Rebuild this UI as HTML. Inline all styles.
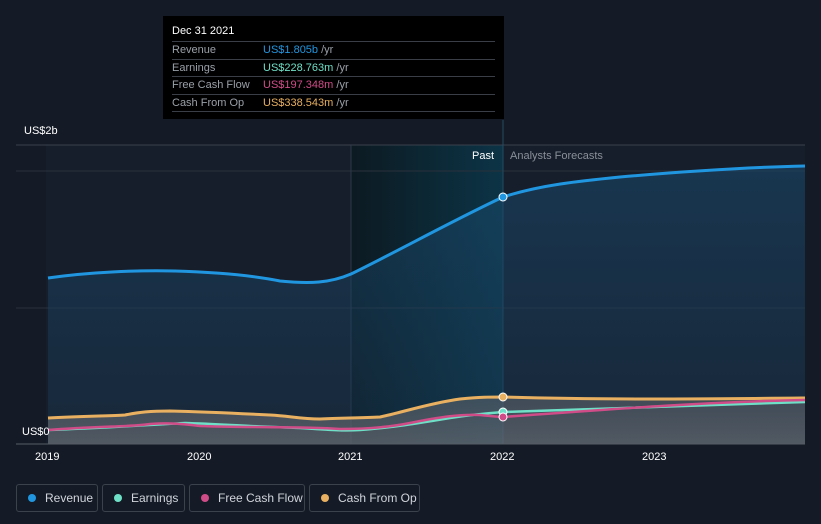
<!DOCTYPE html>
<html><head><meta charset="utf-8"><style>
*{margin:0;padding:0;box-sizing:border-box}
body{width:821px;height:524px;background:#151b26;font-family:"Liberation Sans",sans-serif;position:relative;overflow:hidden}
.tt{position:absolute;left:163px;top:16px;width:341px;height:103px;background:#000;color:#fff;font-size:11px}
.tt .h{position:absolute;left:9px;top:9px}
.row{position:absolute;left:9px;width:323px;height:17.5px;border-top:1px solid #3a3f47;line-height:16px;color:#9aa0a8}
.row span{position:absolute;left:91px}
.lg{position:absolute;top:484px;height:28px;border:1px solid #3c424c;border-radius:3px;color:#d0d4da;font-size:12px;line-height:26px;padding-left:28px;white-space:nowrap}
.lg i{position:absolute;left:11px;top:9px;width:8px;height:8px;border-radius:50%}
.ax{position:absolute;top:451px;color:#fff;font-size:11px}
</style></head><body>
<svg width="821" height="524" style="position:absolute;left:0;top:0">
<defs>
<linearGradient id="pg" x1="0" x2="1" y1="0" y2="0"><stop offset="0" stop-color="#0c1a22"/><stop offset="1" stop-color="#0c3446"/></linearGradient>
<linearGradient id="rf" x1="0" x2="0" y1="0" y2="1"><stop offset="0" stop-color="#1a4a6e" stop-opacity=".55"/><stop offset="1" stop-color="#1a3a56" stop-opacity=".35"/></linearGradient>
<linearGradient id="gf" x1="0" x2="0" y1="0" y2="1"><stop offset="0" stop-color="#5a6068" stop-opacity=".6"/><stop offset="1" stop-color="#6a6e74" stop-opacity=".7"/></linearGradient>
</defs>
<rect x="46" y="145" width="759" height="299" fill="#161e2b"/>
<rect x="351" y="145" width="152" height="299" fill="url(#pg)"/>
<line x1="16" y1="145" x2="805" y2="145" stroke="#3a414c"/>
<line x1="16" y1="171" x2="805" y2="171" stroke="#2a313c"/>
<line x1="16" y1="308" x2="805" y2="308" stroke="#2a313c"/>
<line x1="351" y1="145" x2="351" y2="444" stroke="#2a3a48"/>
<line x1="503" y1="120" x2="503" y2="444" stroke="#1f4d63"/>
<path d="M48,278 C90,272 140,270 175,271 C210,272 250,275 280,281 C310,284 330,283 351,274 C400,250 450,222 503,197 C540,185 580,181 620,177 C700,170 760,167 805,166 L805,444 L48,444Z" fill="url(#rf)"/>
<path d="M48,418 C80,416 110,416 125,415 C140,412 150,411 170,411 C210,412 250,414 270,415 C290,416 300,419 320,419 C340,418 360,418 380,417 C400,413 430,403 460,399 C480,397 490,397 503,397 C600,400 700,399 805,398 L805,444 L48,444Z" fill="url(#gf)"/>
<path d="M48,278 C90,272 140,270 175,271 C210,272 250,275 280,281 C310,284 330,283 351,274 C400,250 450,222 503,197 C540,185 580,181 620,177 C700,170 760,167 805,166" fill="none" stroke="#2196e0" stroke-width="3"/>
<path d="M48,418 C80,416 110,416 125,415 C140,412 150,411 170,411 C210,412 250,414 270,415 C290,416 300,419 320,419 C340,418 360,418 380,417 C400,413 430,403 460,399 C480,397 490,397 503,397 C600,400 700,399 805,398" fill="none" stroke="#e8b060" stroke-width="3"/>
<path d="M48,430 C100,428 150,425 185,423 C220,424 260,427 300,428 C330,430 345,431 360,430 C390,428 420,423 450,418 C475,414 490,413 503,412 C600,408 700,405 805,402" fill="none" stroke="#6fe0c8" stroke-width="2.5"/>
<path d="M48,430 C100,426 130,427 150,424 C165,423 175,423 200,426 C250,428 300,426 340,429 C370,429 390,427 410,423 C440,417 460,414 480,415 C490,416 500,417 503,417 C600,410 700,402 805,400" fill="none" stroke="#d04c88" stroke-width="2.5"/>
<line x1="16" y1="444" x2="805" y2="444" stroke="#555c66"/>
<circle cx="503" cy="197" r="4" fill="#2196e0" stroke="#fff" stroke-width="1"/>
<circle cx="503" cy="397" r="4" fill="#e8b060" stroke="#fff" stroke-width="1"/>
<circle cx="503" cy="412" r="4" fill="#6fe0c8" stroke="#fff" stroke-width="1"/>
<circle cx="503" cy="417" r="4" fill="#d04c88" stroke="#fff" stroke-width="1"/>
</svg>
<div style="position:absolute;left:24px;top:125px;color:#fff;font-size:11px">US$2b</div>
<div style="position:absolute;left:22px;top:426px;color:#fff;font-size:11px">US$0</div>
<div style="position:absolute;left:472px;top:150px;color:#fff;font-size:11px">Past</div>
<div style="position:absolute;left:510px;top:150px;color:#8a9099;font-size:11px">Analysts Forecasts</div>
<div class="ax" style="left:35px">2019</div>
<div class="ax" style="left:187px">2020</div>
<div class="ax" style="left:338px">2021</div>
<div class="ax" style="left:490px">2022</div>
<div class="ax" style="left:642px">2023</div>
<div class="tt"><div class="h">Dec 31 2021</div>
<div class="row" style="top:25px">Revenue<span><b style="font-weight:normal;color:#2196e0">US$1.805b</b> /yr</span></div>
<div class="row" style="top:42.5px">Earnings<span><b style="font-weight:normal;color:#6fe0c8">US$228.763m</b> /yr</span></div>
<div class="row" style="top:60px">Free Cash Flow<span><b style="font-weight:normal;color:#d04c88">US$197.348m</b> /yr</span></div>
<div class="row" style="top:77.5px">Cash From Op<span><b style="font-weight:normal;color:#e8b060">US$338.543m</b> /yr</span></div>
<div class="row" style="top:95px;height:1px"></div>
</div>
<div class="lg" style="left:16px;width:82px"><i style="background:#2196e0"></i>Revenue</div>
<div class="lg" style="left:102px;width:83px"><i style="background:#6fe0c8"></i>Earnings</div>
<div class="lg" style="left:189px;width:116px"><i style="background:#d04c88"></i>Free Cash Flow</div>
<div class="lg" style="left:309px;width:111px"><i style="background:#e8b060"></i>Cash From Op</div>
</body></html>
